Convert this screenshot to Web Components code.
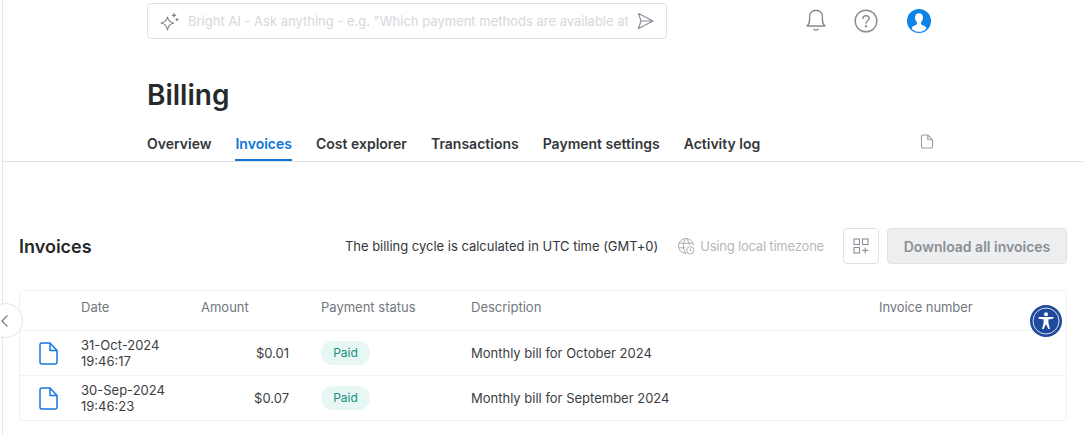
<!DOCTYPE html>
<html>
<head>
<meta charset="utf-8">
<title>Billing</title>
<style>
  html, body { margin: 0; height: 100%; overflow: hidden; background: #fff; }
  body { font-family: Inter, "Liberation Sans", sans-serif; color: #26292c; }
</style>
</head>
<body>
<billing-page></billing-page>

<script>
class TopBar extends HTMLElement {
  constructor() {
    super();
    this.attachShadow({mode: "open"});
    this.shadowRoot.innerHTML = `
    <style>
      :host { display: flex; align-items: flex-start; padding: 3px 0 0 144px; height: 41px; box-sizing: border-box; }
      .search { width: 520px; height: 36px; box-sizing: border-box; border: 1px solid #dfe1e3; border-radius: 4px; display: flex; align-items: center; padding: 0 12px; }
      .search span { flex: 1; margin-left: 9px; font-size: 13px; color: #d5d8dc; white-space: nowrap; overflow: hidden; }
      .icons { display: flex; align-items: center; margin-left: 138px; height: 36px; }
      svg { display: block; flex: none; }
    </style>
    <div class="search">
      <svg width="19" height="19" viewBox="0 0 19 19" fill="none" stroke="#7f858c" stroke-width="1.2" stroke-linejoin="round">
        <path d="M7.5 5 C8.1 8.4 9.6 10 13.6 11 C9.6 12 8.1 13.6 7.5 18 C6.9 13.6 5.4 12 1 11 C5.4 10 6.9 8.4 7.5 5Z"/>
        <path d="M14 1v4.6M11.8 3.3h4.4M17 6.2v3M15.6 7.7h2.9"/>
      </svg>
      <span>Bright AI - Ask anything - e.g. "Which payment methods are available at</span>
      <svg style="margin-left:9px" width="17" height="18" viewBox="0 0 17 18" fill="none" stroke="#8a9097" stroke-width="1.2" stroke-linejoin="round">
        <path d="M1.5 1.5 L16 9 L1.5 16.5 L4 9 Z M4 9 H16"/>
      </svg>
    </div>
    <div class="icons">
      <svg width="22" height="24" viewBox="0 0 22 24" fill="none" stroke="#878d94" stroke-width="1.4" stroke-linecap="round" stroke-linejoin="round" style="margin-top:-3px">
        <path d="M2 18 C4 16.5 4.6 15 4.6 11.5 V8.5 C4.6 4.8 7.4 2.2 11 2.2 C14.6 2.2 17.4 4.8 17.4 8.5 V11.5 C17.4 15 18 16.5 20 18 Z"/>
        <path d="M9 21.2 C10 22 12 22 13 21.2"/>
      </svg>
      <svg style="margin-left:27px" width="24" height="24" viewBox="0 0 24 24" fill="none" stroke="#878d94" stroke-width="1.4" stroke-linecap="round">
        <circle cx="12" cy="12" r="10.8"/>
        <path d="M8.9 9.6 C8.9 7.8 10.3 6.8 12 6.8 C13.8 6.8 15.2 7.9 15.2 9.5 C15.2 11.8 12 11.8 12 14.2"/>
        <circle cx="12" cy="17.2" r=".5" fill="#878d94"/>
      </svg>
      <svg style="margin-left:29px" width="24" height="24" viewBox="0 0 24 24">
        <circle cx="12" cy="12" r="12" fill="#0c83e6"/>
        <path fill="#fff" d="M12 4.2 C9.4 4.2 8 6.1 8 8.6 C8 10.6 8.8 12.2 9.9 13.3 V14.8 C9.9 15.6 8.9 16 7 16.8 C5.6 17.4 5 18.2 4.6 19.4 C6.5 21.6 9.1 22.8 12 22.8 C14.9 22.8 17.5 21.6 19.4 19.4 C19 18.2 18.4 17.4 17 16.8 C15.1 16 14.1 15.6 14.1 14.8 V13.3 C15.2 12.2 16 10.6 16 8.6 C16 6.1 14.6 4.2 12 4.2Z"/>
      </svg>
    </div>`;
  }
}

class NavTabs extends HTMLElement {
  constructor() {
    super();
    this.attachShadow({mode: "open"});
    this.shadowRoot.innerHTML = `
    <style>
      :host { display: flex; align-items: flex-end; height: 47px; padding-left: 144px; border-bottom: 1px solid #dfe1e3; position: relative; }
      a { display: block; font-size: 14px; font-weight: 600; color: #33373b; margin-right: 24px; padding-bottom: 7px; line-height: 17px; border-bottom: 2px solid transparent; white-space: nowrap; }
      a.on { color: #0c76d9; border-bottom-color: #0c76d9; }
      svg { position: absolute; left: 917px; top: 20px; }
    </style>
    <a>Overview</a><a class="on">Invoices</a><a>Cost explorer</a><a>Transactions</a><a>Payment settings</a><a>Activity log</a>
    <svg width="14" height="15" viewBox="0 0 14 15" fill="none" stroke="#9a9fa5" stroke-width="1.1" stroke-linejoin="round">
      <path d="M1.5 2.3 Q1.5 1 2.8 1 H7.8 L12.5 5.8 V12.7 Q12.5 14 11.2 14 H2.8 Q1.5 14 1.5 12.7 Z"/>
      <path d="M7.8 1 V5.8 H12.5"/>
    </svg>`;
  }
}

class StatusBadge extends HTMLElement {
  constructor() {
    super();
    this.attachShadow({mode: "open"});
    this.shadowRoot.innerHTML = `
    <style>
      :host { display: inline-block; background: #e6f7f4; color: #1a8f80; font-size: 12px; line-height: 24px; height: 24px; width: 49px; text-align: center; border-radius: 12px; }
    </style>
    <slot></slot>`;
  }
}

const rowColumns = "61px 120px 88px 32px 150px 408px 1fr";

class InvoiceRow extends HTMLElement {
  constructor() {
    super();
    this.attachShadow({mode: "open"});
    this.shadowRoot.innerHTML = `
    <style>
      :host { display: grid; grid-template-columns: ${rowColumns}; align-items: center; height: 45px; border-top: 1px solid #f0f1f2; font-size: 13px; color: #3c4044; box-sizing: border-box; }
      svg { margin-left: 19px; display: block; }
      .date { line-height: 16px; }
      .amount { text-align: right; grid-column: 3; }
      .status { grid-column: 5; display: flex; }
      .desc { white-space: nowrap; }
    </style>
    <svg width="19" height="23" viewBox="0 0 19 23" fill="none" stroke="#1477e0" stroke-width="1.5" stroke-linejoin="round">
      <path d="M1 3 Q1 1 3 1 H11 L18 8.5 V20 Q18 22 16 22 H3 Q1 22 1 20 Z"/>
      <path d="M11 1 V8.5 H18"/>
    </svg>
    <div class="date"></div>
    <div class="amount"></div>
    <div class="status"><status-badge>Paid</status-badge></div>
    <div class="desc"></div>`;
  }

  connectedCallback() {
    const root = this.shadowRoot;
    root.querySelector(".date").innerHTML = this.getAttribute("date") + "<br>" + this.getAttribute("time");
    root.querySelector(".amount").textContent = this.getAttribute("amount");
    root.querySelector(".desc").textContent = this.getAttribute("desc");
  }
}

class InvoiceTable extends HTMLElement {
  constructor() {
    super();
    this.attachShadow({mode: "open"});
    this.shadowRoot.innerHTML = `
    <style>
      :host { display: block; border: 1px solid #f0f1f2; border-radius: 4px; }
      .head { display: grid; grid-template-columns: ${rowColumns}; align-items: center; height: 39px; box-sizing: border-box; padding-bottom: 8px; font-size: 13px; color: #72777d; }
      .head div:nth-child(1) { grid-column: 2; }
      .head div:nth-child(2) { grid-column: 3; }
      .head div:nth-child(3) { grid-column: 5; }
      .head div:nth-child(4) { grid-column: 6; }
      .head div:nth-child(5) { grid-column: 7; letter-spacing: -.1px; }
    </style>
    <div class="head"><div>Date</div><div>Amount</div><div>Payment status</div><div>Description</div><div>Invoice number</div></div>
    <slot></slot>`;
  }
}

class InvoicesSection extends HTMLElement {
  constructor() {
    super();
    this.attachShadow({mode: "open"});
    this.shadowRoot.innerHTML = `
    <style>
      :host { display: block; padding: 66px 16px 0; }
      .bar { display: flex; align-items: center; height: 36px; margin-bottom: 26px; }
      h2 { margin: 0; font-size: 18px; font-weight: 600; color: #26292c; flex: 1; }
      .cycle { font-size: 13px; color: #33373b; white-space: nowrap; letter-spacing: -.02px; }
      .tz { display: flex; align-items: center; margin-left: 19px; font-size: 13px; letter-spacing: -.2px; color: #b4b9be; white-space: nowrap; }
      .tz svg { margin-right: 5px; }
      .grid-btn { width: 36px; height: 36px; box-sizing: border-box; margin-left: 19px; border: 1px solid #dfe1e3; border-radius: 4px; display: flex; align-items: center; justify-content: center; }
      .dl { width: 180px; height: 36px; box-sizing: border-box; margin-left: 8px; border: 1px solid #dfe1e3; border-radius: 4px; background: #eceef0; color: #8a8f94; font-size: 14px; font-weight: 600; display: flex; align-items: center; justify-content: center; white-space: nowrap; }
    </style>
    <div class="bar">
      <h2>Invoices</h2>
      <span class="cycle">The billing cycle is calculated in UTC time (GMT+0)</span>
      <div class="tz">
        <svg width="18" height="18" viewBox="0 0 18 18" fill="none" stroke="#a9aeb3" stroke-width="1">
          <path d="M9 16.5 A7.5 7.5 0 1 1 16.5 8.5 M1.7 6.2 H16 M1.7 10.8 H8 M9 1 C5.5 4.5 5.5 12.5 9 16.5 M9 1 C11 3 12 5 12.2 8"/>
          <circle cx="13.3" cy="13.3" r="3.7" fill="#fff"/>
          <path d="M13.3 11.3 V13.4 L14.7 14.3"/>
        </svg>
        Using local timezone
      </div>
      <div class="grid-btn">
        <svg width="16" height="16" viewBox="0 0 16 16" fill="none" stroke="#8a9097" stroke-width="1.1">
          <rect x="1" y="1" width="5.5" height="5.5"/><rect x="9.5" y="1" width="5.5" height="5.5"/><rect x="1" y="9.5" width="5.5" height="5.5"/>
          <path d="M12.2 9.5 V15.4 M9.3 12.4 H15.2"/>
        </svg>
      </div>
      <div class="dl">Download all invoices</div>
    </div>
    <slot></slot>`;
  }
}

class BillingPage extends HTMLElement {
  constructor() {
    super();
    this.attachShadow({mode: "open"});
    this.shadowRoot.innerHTML = `
    <style>
      :host { display: block; height: 434px; border-left: 1px solid #e4e5e6; margin-left: 2px; position: relative; font-family: Inter, "Liberation Sans", sans-serif; overflow: visible; }
      h1 { margin: 0; padding: 0 0 0 144px; height: 38px; margin-top: 35px; font-size: 28px; line-height: 38px; font-weight: 600; color: #26292c; }
      .collapse { position: absolute; left: -15px; top: 303px; width: 35px; height: 35px; box-sizing: border-box; border: 1px solid #e4e5e6; border-radius: 50%; background: #fff; display: flex; align-items: center; justify-content: flex-end; padding-right: 14px; }
      .a11y { position: absolute; left: 1027px; top: 305px; width: 32px; height: 32px; }
    </style>
    <top-bar></top-bar>
    <h1>Billing</h1>
    <nav-tabs></nav-tabs>
    <invoices-section>
      <invoice-table>
        <invoice-row date="31-Oct-2024" time="19:46:17" amount="$0.01" desc="Monthly bill for October 2024"></invoice-row>
        <invoice-row date="30-Sep-2024" time="19:46:23" amount="$0.07" desc="Monthly bill for September 2024"></invoice-row>
      </invoice-table>
    </invoices-section>
    <div class="collapse">
      <svg width="7" height="12" viewBox="0 0 7 12" fill="none" stroke="#72777d" stroke-width="1.2" stroke-linecap="round" stroke-linejoin="round"><path d="M6 .8 L1 6 L6 11.2"/></svg>
    </div>
    <svg class="a11y" viewBox="0 0 32 32">
      <circle cx="16" cy="16" r="16" fill="#1f4a9c"/>
      <circle cx="16" cy="16" r="13" fill="none" stroke="#d5deee" stroke-width="1"/>
      <circle cx="16" cy="9.3" r="2" fill="#fff"/>
      <path fill="#fff" d="M8.5 12 H23.5 V13.4 L18.4 14.4 V17.8 L20 24 H18.4 L16 19 L13.6 24 H12 L13.6 17.8 V14.4 L8.5 13.4 Z"/>
    </svg>`;
  }
}

customElements.define("top-bar", TopBar);
customElements.define("nav-tabs", NavTabs);
customElements.define("status-badge", StatusBadge);
customElements.define("invoice-row", InvoiceRow);
customElements.define("invoice-table", InvoiceTable);
customElements.define("invoices-section", InvoicesSection);
customElements.define("billing-page", BillingPage);
</script>
</body>
</html>
